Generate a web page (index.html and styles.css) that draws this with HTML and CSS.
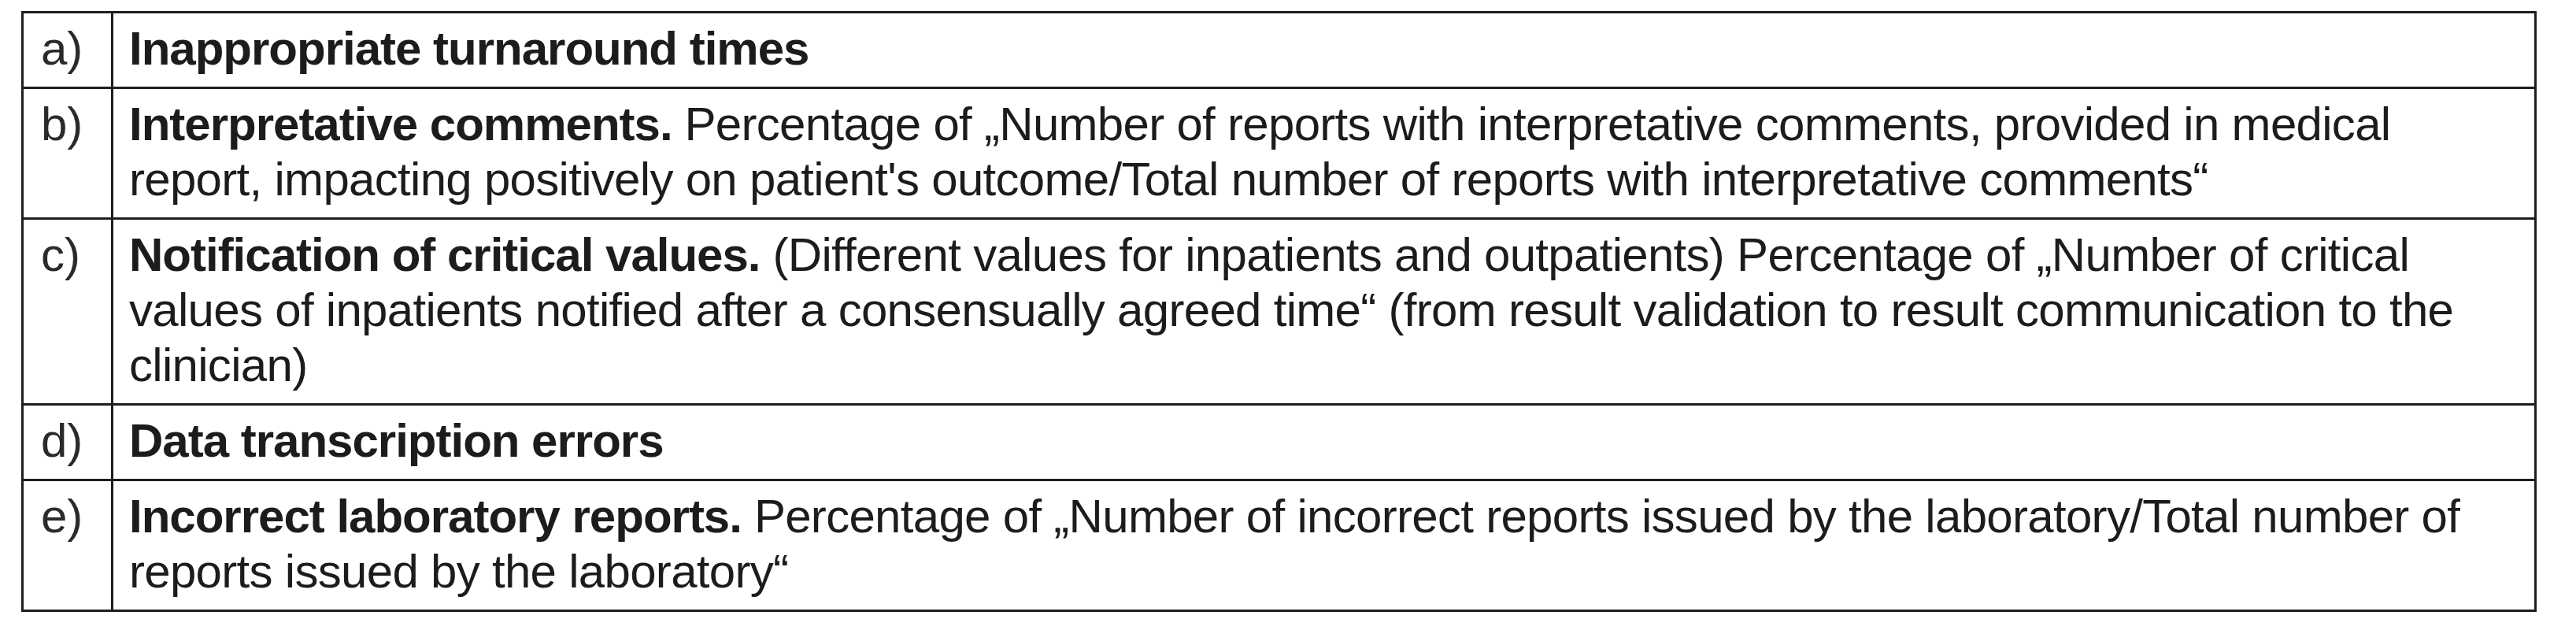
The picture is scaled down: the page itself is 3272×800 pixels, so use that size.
FILE: index.html
```html
<!DOCTYPE html>
<html>
<head>
<meta charset="utf-8">
<link rel="stylesheet" href="styles.css">
</head>
<body>
<div class="table">
  <div class="label">a)</div>
  <div class="text"><b>Inappropriate turnaround times</b></div>
  <div class="label">b)</div>
  <div class="text"><b>Interpretative comments.</b> Percentage of „Number of reports with interpretative comments, provided in medical report, impacting positively on patient's outcome/Total number of reports with interpretative comments“</div>
  <div class="label">c)</div>
  <div class="text"><b>Notification of critical values.</b> (Different values for inpatients and outpatients) Percentage of „Number of critical values of inpatients notified after a consensually agreed time“ (from result validation to result communication to the clinician)</div>
  <div class="label">d)</div>
  <div class="text"><b>Data transcription errors</b></div>
  <div class="label">e)</div>
  <div class="text"><b>Incorrect laboratory reports.</b> Percentage of „Number of incorrect reports issued by the laboratory/Total number of reports issued by the laboratory“</div>
</div>
</body>
</html>
```

FILE: styles.css
```css
html, body {
  margin: 0;
  padding: 0;
  background: #ffffff;
}
body {
  font-family: "Liberation Sans", Arial, sans-serif;
  font-size: 60px;
  line-height: 70px;
  color: #1c1c1c;
}
.table {
  display: grid;
  grid-template-columns: 114px 1fr;
  width: 3195px;
  margin: 14px 0 0 27px;
  border-top: 3px solid #1e1e1e;
  border-left: 3px solid #1e1e1e;
  box-sizing: border-box;
}
.label, .text {
  border-right: 3px solid #1e1e1e;
  border-bottom: 3px solid #1e1e1e;
  padding: 10px 12px 13px 20px;
}
.label {
  color: #2a2a2a;
  padding-left: 22px;
}
.text {
  letter-spacing: -0.7px;
}
.text b {
  font-weight: bold;
  letter-spacing: -1px;
}
```
